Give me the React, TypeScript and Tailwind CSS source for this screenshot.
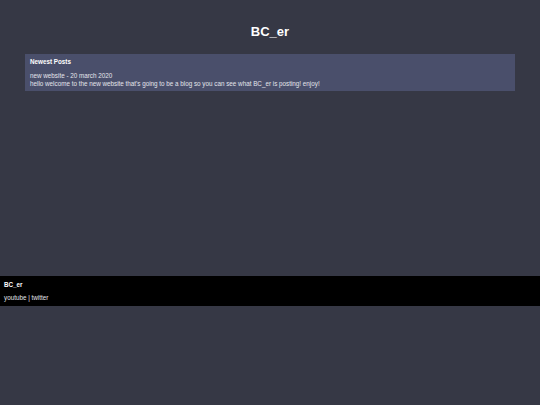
export default function App() {
  return (
    <div
      className="min-h-[405px] bg-[#363845] text-white"
      style={{ fontFamily: '"Liberation Sans", Arial, sans-serif' }}
    >
      <main className="h-[276px] px-[25px]">
        <h1 className="pt-[24px] pb-[14px] text-center text-[13px] font-bold leading-[16px]">BC_er</h1>
        <section className="bg-[#4a4f6b] px-[5px] pt-[3px] pb-[4px] text-[6.3px] leading-[7.6px]">
          <h2 className="font-bold leading-[10px]">Newest Posts</h2>
          <div className="mt-[5px] text-[#e4e5ec]">
            <p>new website - 20 march 2020</p>
            <p>hello welcome to the new website that's going to be a blog so you can see what BC_er is posting! enjoy!</p>
          </div>
        </section>
      </main>
      <footer className="h-[30px] bg-black px-[4px] pt-[3.5px] text-[6.3px]">
        <p className="font-bold leading-[9px]">BC_er</p>
        <p className="mt-[5.8px] leading-[8px] text-[#e4e5ec]">youtube | twitter</p>
      </footer>
    </div>
  );
}
